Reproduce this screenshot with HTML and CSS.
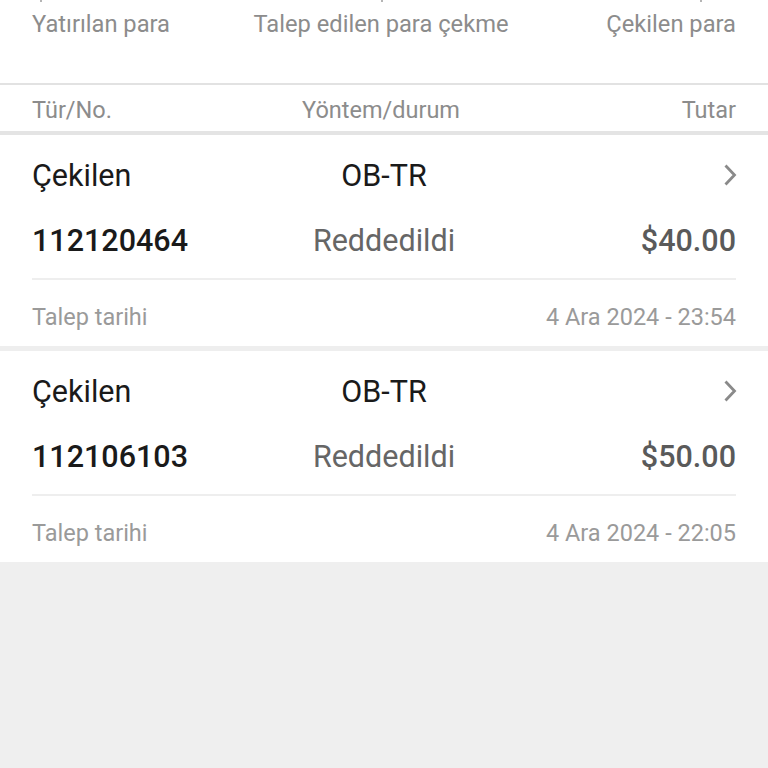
FILE: index.html
```html
<!DOCTYPE html>
<html lang="tr">
<head>
<meta charset="utf-8">
<link rel="stylesheet" href="styles.css">
</head>
<body>
<div class="page">
  <div class="tabs">
    <div class="tab tab-left"><span class="tick"></span>Yatırılan para</div>
    <div class="tab tab-center"><span class="tick"></span>Talep edilen para çekme</div>
    <div class="tab tab-right"><span class="tick"></span>Çekilen para</div>
  </div>
  <div class="thead">
    <div class="c-left">Tür/No.</div>
    <div class="c-mid">Yöntem/durum</div>
    <div class="c-right">Tutar</div>
  </div>
  <div class="list">
    <div class="card">
      <div class="row row-top">
        <div class="c-left">Çekilen</div>
        <div class="c-mid">OB-TR</div>
        <div class="c-right"><svg class="chev" width="18" height="26" viewBox="0 0 18 26"><path d="M4.5 3.5 L13.5 13 L4.5 22.5" fill="none" stroke="#8a8a8a" stroke-width="2.8"/></svg></div>
      </div>
      <div class="row row-num">
        <div class="c-left num">112120464</div>
        <div class="c-mid status">Reddedildi</div>
        <div class="c-right amount">$40.00</div>
      </div>
      <div class="foot">
        <div>Talep tarihi</div>
        <div>4 Ara 2024 - 23:54</div>
      </div>
    </div>
    <div class="card">
      <div class="row row-top">
        <div class="c-left">Çekilen</div>
        <div class="c-mid">OB-TR</div>
        <div class="c-right"><svg class="chev" width="18" height="26" viewBox="0 0 18 26"><path d="M4.5 3.5 L13.5 13 L4.5 22.5" fill="none" stroke="#8a8a8a" stroke-width="2.8"/></svg></div>
      </div>
      <div class="row row-num">
        <div class="c-left num">112106103</div>
        <div class="c-mid status">Reddedildi</div>
        <div class="c-right amount">$50.00</div>
      </div>
      <div class="foot">
        <div>Talep tarihi</div>
        <div>4 Ara 2024 - 22:05</div>
      </div>
    </div>
  </div>
</div>
</body>
</html>
```

FILE: styles.css
```css
html, body {
  margin: 0;
  padding: 0;
  background: #efefef;
}
body {
  font-family: Roboto, "Noto Sans", sans-serif;
  width: 768px;
  height: 768px;
  overflow: hidden;
}
.page {
  display: flex;
  flex-direction: column;
}
.tabs {
  background: #fff;
  display: grid;
  grid-template-columns: 1fr 1.3fr 1fr;
  padding: 0 32px;
  font-size: 23.7px;
  color: #8c8c8c;
  border-bottom: 2px solid #e2e2e2;
  box-sizing: border-box;
  height: 85px;
}
.tab {
  position: relative;
  padding-top: 10px;
  line-height: 28px;
  white-space: nowrap;
}
.tab-left { text-align: left; }
.tab-center { text-align: center; margin-left: -6px; }
.tab-right { text-align: right; }
.tick {
  position: absolute;
  top: 0;
  width: 2px;
  height: 2px;
  background: #b5b5b5;
}
.tab-left .tick { left: 8px; }
.tab-center .tick { left: 50%; }
.tab-right .tick { right: 34px; }

.thead {
  background: #fff;
  box-sizing: border-box;
  padding: 4px 32px 0;
  display: grid;
  grid-template-columns: 1fr 1fr 1fr;
  align-items: center;
  font-size: 23.5px;
  color: #8c8c8c;
  border-bottom: 4px solid #e4e4e4;
  height: 50px;
}
.thead .c-mid { margin-left: -6px; }
.c-left { text-align: left; white-space: nowrap; }
.c-mid { text-align: center; white-space: nowrap; }
.c-right { text-align: right; white-space: nowrap; }

.list {
  display: flex;
  flex-direction: column;
  gap: 5px;
  background: #eeeeee;
}
.card {
  background: #fff;
  padding: 0 32px;
}
.row {
  display: grid;
  grid-template-columns: 1fr 1fr 1fr;
  align-items: center;
}
.row-top {
  box-sizing: border-box;
  height: 76px;
  padding-top: 4px;
  font-size: 30.5px;
  color: #1a1a1a;
}
.row-top .c-right {
  display: flex;
  justify-content: flex-end;
}
.chev { margin-right: -3px; }
.row-num {
  box-sizing: border-box;
  height: 69px;
  font-size: 30.5px;
  border-bottom: 2px solid #eeeeee;
  padding-bottom: 9px;
}
.num { color: #1a1a1a; font-weight: 500; }
.status { color: #666; }
.amount { color: #5a5a5a; font-weight: 500; }
.foot {
  box-sizing: border-box;
  display: flex;
  justify-content: space-between;
  align-items: center;
  height: 66px;
  padding-top: 8px;
  font-size: 23.5px;
  color: #9a9a9a;
}
```
